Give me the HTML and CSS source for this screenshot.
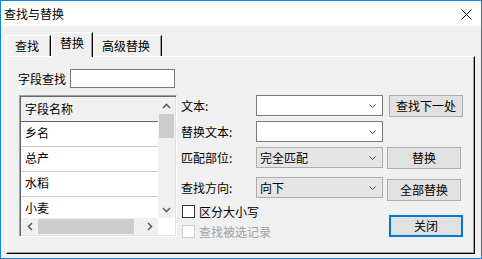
FILE: index.html
```html
<!DOCTYPE html>
<html lang="zh-CN">
<head>
<meta charset="utf-8">
<title>查找与替换</title>
<link rel="stylesheet" href="styles.css">
</head>
<body>
<div class="window">
  <div class="titlebar">
    <span class="title">查找与替换</span>
    <svg class="close" width="11" height="11" viewBox="0 0 11 11"><path d="M0.5 0.5 L10.5 10.5 M10.5 0.5 L0.5 10.5" stroke="#000" stroke-width="1" fill="none"/></svg>
  </div>
  <div class="client">
    <div class="tabs">
      <div class="tab tab-first">查找</div>
      <div class="tab active">替换</div>
      <div class="tab">高级替换</div>
    </div>
    <div class="panel">
      <div class="leftcol">
        <div class="search">
          <span class="search-label">字段查找</span>
          <div class="input"></div>
        </div>
        <div class="listbox">
          <div class="listmain">
            <div class="rows">
              <div class="row head">字段名称</div>
              <div class="row">乡名</div>
              <div class="row">总产</div>
              <div class="row">水稻</div>
              <div class="row">小麦</div>
            </div>
            <div class="vscroll">
              <div class="sbtn"><svg width="9" height="6" viewBox="0 0 9 6"><path d="M1 5 L4.5 1.5 L8 5" stroke="#606060" stroke-width="1.6" fill="none"/></svg></div>
              <div class="vthumb"></div>
              <div class="vtrack"></div>
              <div class="sbtn"><svg width="9" height="6" viewBox="0 0 9 6"><path d="M1 1 L4.5 4.5 L8 1" stroke="#606060" stroke-width="1.6" fill="none"/></svg></div>
            </div>
          </div>
          <div class="hrow">
            <div class="hscroll">
              <div class="sbtn"><svg width="6" height="9" viewBox="0 0 6 9"><path d="M5 1 L1.5 4.5 L5 8" stroke="#606060" stroke-width="1.6" fill="none"/></svg></div>
              <div class="hthumb"></div>
              <div class="htrack"></div>
              <div class="sbtn"><svg width="6" height="9" viewBox="0 0 6 9"><path d="M1 1 L4.5 4.5 L1 8" stroke="#606060" stroke-width="1.6" fill="none"/></svg></div>
            </div>
            <div class="corner"></div>
          </div>
        </div>
      </div>
      <div class="rightcol">
        <div class="frow r1">
          <span class="flabel">文本:</span>
          <div class="combo"><span></span><svg width="7" height="4" viewBox="0 0 7 4"><path d="M0.5 0.5 L3.5 3.5 L6.5 0.5" stroke="#444" stroke-width="1" fill="none"/></svg></div>
          <div class="btn btn-wide">查找下一处</div>
        </div>
        <div class="frow r2">
          <span class="flabel">替换文本:</span>
          <div class="combo"><span></span><svg width="7" height="4" viewBox="0 0 7 4"><path d="M0.5 0.5 L3.5 3.5 L6.5 0.5" stroke="#444" stroke-width="1" fill="none"/></svg></div>
        </div>
        <div class="frow r3">
          <span class="flabel">匹配部位:</span>
          <div class="combo ro"><span>完全匹配</span><svg width="7" height="4" viewBox="0 0 7 4"><path d="M0.5 0.5 L3.5 3.5 L6.5 0.5" stroke="#444" stroke-width="1" fill="none"/></svg></div>
          <div class="btn btn-narrow">替换</div>
        </div>
        <div class="frow r4">
          <span class="flabel">查找方向:</span>
          <div class="combo ro"><span>向下</span><svg width="7" height="4" viewBox="0 0 7 4"><path d="M0.5 0.5 L3.5 3.5 L6.5 0.5" stroke="#444" stroke-width="1" fill="none"/></svg></div>
          <div class="btn btn-narrow btn-low">全部替换</div>
        </div>
        <div class="bottom">
          <div class="checks">
            <div class="check"><span class="box"></span><span>区分大小写</span></div>
            <div class="check disabled"><span class="box"></span><span>查找被选记录</span></div>
          </div>
          <div class="btn btn-default">关闭</div>
        </div>
      </div>
    </div>
  </div>
</div>
</body>
</html>
```

FILE: styles.css
```css
* { box-sizing: border-box; }
html, body { margin: 0; padding: 0; background: #fff; }
body {
  font-family: "Noto Sans CJK SC", "Microsoft YaHei", sans-serif;
  font-size: 12px;
  color: #000;
}
.window {
  width: 482px;
  height: 259px;
  border: 1px solid #1883d7;
  display: flex;
  flex-direction: column;
  background: #f0f0f0;
}
.titlebar {
  height: 25px;
  flex: none;
  background: #fff;
  display: flex;
  align-items: center;
  justify-content: space-between;
  padding: 0 9px 0 3px;
}
.title { line-height: 14px; }
.close { display: block; margin-top: 1px; }
.client {
  flex: 1;
  display: flex;
  flex-direction: column;
  padding: 6px 6px 4px 5px;
}
.tabs {
  display: flex;
  align-items: flex-end;
  height: 24px;
  flex: none;
}
.tab {
  height: 21px;
  line-height: 20px;
  padding: 0 11px 0 8px;
  border-top: 1px solid #fff;
  border-left: 1px solid #fff;
  border-right: 1px solid #000;
  box-shadow: inset -1px 0 #a0a0a0;
  background: #f0f0f0;
  white-space: nowrap;
}
.tab.active {
  height: 25px;
  padding: 0 8px 4px 8px;
  margin-bottom: -1px;
  position: relative;
  z-index: 1;
}
.panel {
  flex: 1;
  display: flex;
  padding-left: 11px;
  border-top: 1px solid #fff;
  border-left: 1px solid #fff;
  border-right: 1px solid #000;
  border-bottom: 1px solid #000;
  box-shadow: inset -1px -1px #a0a0a0;
}
.leftcol {
  width: 159px;
  padding-top: 12px;
  display: flex;
  flex-direction: column;
}
.search {
  display: flex;
  align-items: center;
  height: 19px;
}
.search-label { width: 52px; line-height: 16px; }
.input {
  width: 105px;
  height: 19px;
  border: 1px solid #7a7a7a;
  background: #fff;
}
.listbox {
  margin-top: 7px;
  margin-left: 1px;
  width: 158px;
  height: 142px;
  padding: 1px;
  border: 1px solid;
  border-color: #a0a0a0 #fff #fff #a0a0a0;
  box-shadow: inset 1px 1px #696969, inset -1px -1px #e3e3e3;
  display: flex;
  flex-direction: column;
}
.listmain {
  display: flex;
  height: 121px;
}
.rows {
  flex: 1;
  background: #fff;
  overflow: hidden;
}
.row {
  height: 25px;
  line-height: 22px;
  padding-left: 4px;
  border-bottom: 1px solid #c8c8c8;
  background: #fff;
}
.row.head {
  background: #f0f0f0;
  border-bottom-color: #646464;
  line-height: 24px;
}
.vscroll {
  width: 17px;
  background: #f0f0f0;
  display: flex;
  flex-direction: column;
}
.sbtn {
  width: 17px;
  height: 17px;
  flex: none;
  display: flex;
  align-items: center;
  justify-content: center;
}
.vthumb {
  height: 24px;
  margin: 0 1px;
  background: #cdcdcd;
}
.vtrack { flex: 1; }
.hrow {
  display: flex;
  height: 17px;
}
.hscroll {
  flex: 1;
  display: flex;
  background: #f0f0f0;
}
.hthumb {
  width: 96px;
  margin: 1px 0;
  background: #cdcdcd;
}
.htrack { flex: 1; }
.corner {
  width: 17px;
  background: #fff;
}
.rightcol {
  margin-left: 4px;
  padding-top: 38px;
}
.frow {
  display: flex;
  align-items: flex-start;
}
.flabel {
  width: 75px;
  height: 21px;
  line-height: 21px;
}
.combo {
  width: 127px;
  height: 21px;
  border: 1px solid #7a7a7a;
  background: #fff;
  display: flex;
  align-items: center;
  justify-content: space-between;
  padding: 0 6px 0 3px;
  line-height: 19px;
}
.combo svg { display: block; margin-top: 1px; }
.combo.ro {
  background: #e5e5e5;
  border-color: #acacac;
}
.r1 { height: 22px; }
.r2 { margin-top: 4px; }
.r3 { margin-top: 5px; height: 22px; }
.r4 { margin-top: 8px; height: 24px; }
.btn {
  width: 74px;
  height: 22px;
  border: 1px solid #adadad;
  background: #e1e1e1;
  display: flex;
  align-items: center;
  justify-content: center;
  line-height: 16px;
}
.btn-wide { margin-left: 6px; }
.btn-narrow { margin-left: 4px; }
.btn-low { margin-top: 2px; }
.btn-default {
  border: 2px solid #0078d7;
  margin-top: 10px;
}
.bottom {
  display: flex;
  margin-top: 4px;
}
.checks {
  width: 208px;
  display: flex;
  flex-direction: column;
  gap: 7px;
}
.check {
  display: flex;
  align-items: center;
  height: 13px;
  line-height: 13px;
}
.box {
  width: 13px;
  height: 13px;
  border: 1px solid #333;
  background: #fff;
  margin-left: 1px;
  margin-right: 4px;
}
.check.disabled { color: #a0a0a0; }
.check.disabled .box { border-color: #cccccc; background: #fff; }
```
